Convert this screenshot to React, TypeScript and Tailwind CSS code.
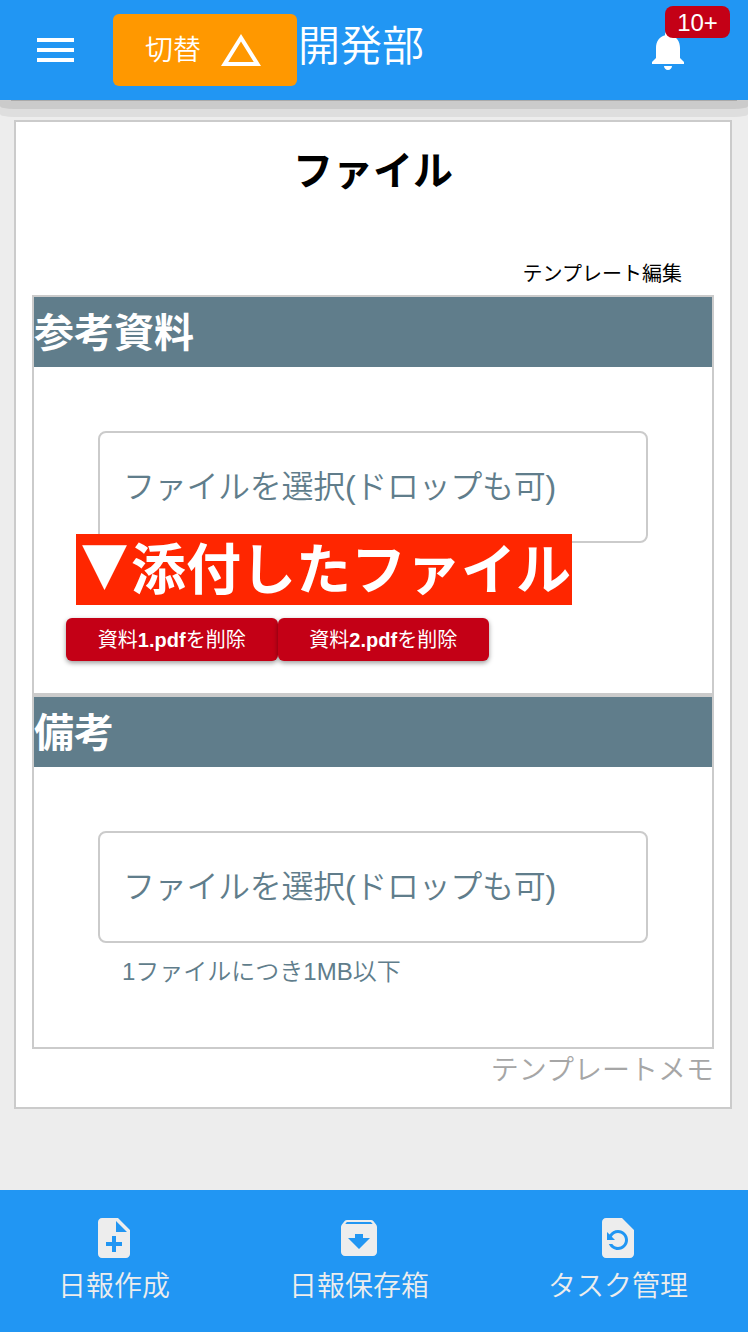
import React from 'react';

const paths = {
  menu: 'M3 18h18.5v-2H3v2zm0-5h18.5v-2H3v2zm0-7v2h18.5V6H3z',
  triangle: 'M12 7.77L18.39 18H5.61L12 7.77M12 4L2 20h20L12 4z',
  bell: 'M12 22c1.1 0 2-.9 2-2h-4c0 1.1.89 2 2 2zm6-6v-5c0-3.07-1.64-5.64-4.5-6.32V4c0-.83-.67-1.5-1.5-1.5s-1.5.67-1.5 1.5v.68C7.63 5.36 6 7.92 6 11v5l-2 2v1h16v-1l-2-2z',
  noteAdd:
    'M14 2H6c-1.1 0-1.99.9-1.99 2L4 20c0 1.1.89 2 1.99 2H18c1.1 0 2-.9 2-2V8l-6-6zm2 14h-3v3h-2v-3H8v-2h3v-3h2v3h3v2zm-3-7V3.5L18.5 9H13z',
  archive:
    'M20.54 5.23l-1.39-1.68C18.88 3.21 18.47 3 18 3H6c-.47 0-.88.21-1.16.55L3.46 5.23C3.17 5.57 3 6.02 3 6.5V19c0 1.1.9 2 2 2h14c1.1 0 2-.9 2-2V6.5c0-.48-.17-.93-.46-1.27zM12 17.5L6.5 12H10v-2h4v2h3.5L12 17.5zM5.12 5l.81-1h12l.94 1H5.12z',
  restore:
    'M14 2H6c-1.1 0-1.99.9-1.99 2L4 20c0 1.1.89 2 1.99 2H18c1.1 0 2-.9 2-2V8l-6-6zm-2 16c-2.05 0-3.81-1.24-4.58-3h1.71c.63.9 1.68 1.5 2.87 1.5 1.93 0 3.5-1.57 3.5-3.5S13.93 9.5 12 9.5c-1.35 0-2.52.78-3.1 1.9l1.6 1.6h-4V9l1.3 1.3C8.69 8.92 10.23 8 12 8c2.76 0 5 2.24 5 5s-2.24 5-5 5z',
};

function Icon({ name }: { name: keyof typeof paths }) {
  return (
    <svg viewBox="0 0 24 24" fill="currentColor" className="size-12 shrink-0">
      <path d={paths[name]} />
    </svg>
  );
}

function Header() {
  return (
    <header className="relative flex h-[100px] shrink-0 items-start bg-[#2196f3] pl-[31px] text-white">
      <button className="mt-[26px]">
        <Icon name="menu" />
      </button>
      <button className="mt-[14px] ml-[34px] flex h-[72px] w-[184px] items-center rounded-md bg-[#ff9800] pl-8 text-[28px] font-[350]">
        <span className="w-[72px] pt-0.5 text-left leading-[40px]">切替</span>
        <Icon name="triangle" />
      </button>
      <h1 className="mt-[17px] ml-px text-[42px] leading-[60px] font-[350]">開発部</h1>
      <button className="relative mt-[26px] mr-14 ml-auto">
        <Icon name="bell" />
        <span className="absolute top-[-20px] left-[21px] flex h-8 w-[65px] items-center justify-center rounded-lg bg-[#c40016] pt-0.5 text-2xl leading-none">
          10+
        </span>
      </button>
    </header>
  );
}

function HeaderShadow() {
  return (
    <div className="h-[17px] bg-[#dedede] [border-radius:0_0_14px_14px/0_0_3px_3px]">
      <div className="h-[9px] bg-[#cbcbcb] [border-radius:0_0_14px_14px/0_0_3px_3px]">
        <div className="mx-[11px] h-px bg-[#aaaaaa]" />
      </div>
    </div>
  );
}

function SectionTitle({ children }: { children: React.ReactNode }) {
  return (
    <h3 className="flex h-[70px] items-center bg-[#607d8b] pt-0.5 text-[40px] leading-[60px] font-bold text-white">
      {children}
    </h3>
  );
}

function FilePicker() {
  return (
    <div className="mx-16 mt-16 flex h-28 items-center rounded-lg border-2 border-[#cbcbcb] pl-[23px] text-[32px] leading-[48px] font-[350] tracking-[-0.3px] text-[#607d8b]">
      ファイルを選択(ドロップも可)
    </div>
  );
}

function DeleteButton({ file }: { file: string }) {
  return (
    <button className="flex h-[43px] w-[211.5px] items-center justify-center rounded-md bg-[#c40016] text-xl whitespace-nowrap text-white shadow-[0_2px_5px_rgba(0,0,0,0.4)]">
      <span className="leading-7 font-normal">
        資料<b className="font-bold">{file}</b>を削除
      </span>
    </button>
  );
}

function NavItem({ icon, label }: { icon: keyof typeof paths; label: string }) {
  return (
    <a className="flex flex-col items-center">
      <Icon name={icon} />
      <span className="mt-1 text-[28px] leading-[42px] font-[350]">{label}</span>
    </a>
  );
}

export default function App() {
  return (
    <div className="flex h-[1332px] w-[748px] flex-col bg-[#ededed] font-['Liberation_Sans','Noto_Sans_CJK_JP',sans-serif]">
      <Header />
      <HeaderShadow />
      <main className="mt-[3px] mr-4 ml-[14px] h-[989px] shrink-0 border-2 border-[#cbcbcb] bg-white px-4">
        <h2 className="mt-[19px] text-center text-[40px] leading-[60px] font-bold text-black">ファイル</h2>
        <div className="mt-[58px] mr-[32px] text-right text-xl leading-[30px] text-black">テンプレート編集</div>
        <section className="mt-[6px] h-[400px] border-2 border-[#cbcbcb]">
          <SectionTitle>参考資料</SectionTitle>
          <div className="relative">
            <FilePicker />
            <div className="absolute top-[103px] left-[42px] flex h-[71px] w-[496px] items-center bg-[#ff2600] text-[55px] leading-[70px] font-bold whitespace-nowrap text-white">
              <span className="translate-x-px -translate-y-2 scale-x-[0.865] font-['Noto_Sans_CJK_JP']">▼</span>
              添付したファイル
            </div>
          </div>
          <div className="mt-[75px] ml-8 flex">
            <DeleteButton file="1.pdf" />
            <DeleteButton file="2.pdf" />
          </div>
        </section>
        <section className="h-[354px] border-2 border-[#cbcbcb]">
          <SectionTitle>備考</SectionTitle>
          <FilePicker />
          <p className="mt-[11px] ml-[88px] text-2xl leading-9 font-[350] text-[#607d8b]">1ファイルにつき1MB以下</p>
        </section>
        <p className="mt-px text-right text-[28px] leading-[42px] font-[350] text-[#a6a6a6]">テンプレートメモ</p>
      </main>
      <nav className="mt-auto flex h-[142px] items-start justify-between bg-[#2196f3] pt-6 pr-[60px] pl-[58px] text-[#ededed]">
        <NavItem icon="noteAdd" label="日報作成" />
        <NavItem icon="archive" label="日報保存箱" />
        <NavItem icon="restore" label="タスク管理" />
      </nav>
    </div>
  );
}
